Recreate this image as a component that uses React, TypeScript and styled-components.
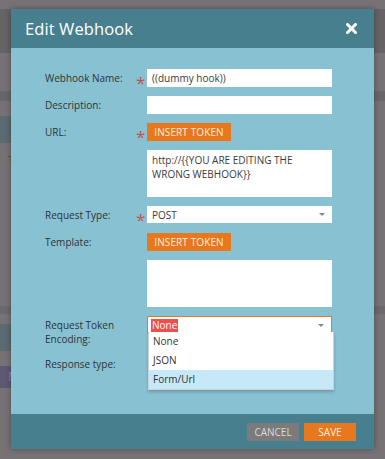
import styled, { createGlobalStyle } from "styled-components";

const GlobalStyle = createGlobalStyle`
  html, body {
    margin: 0;
    padding: 0;
    overflow: hidden;
    background: #767276;
  }
  * {
    box-sizing: border-box;
  }
`;

const Page = styled.div`
  position: relative;
  width: 385px;
  height: 459px;
  overflow: hidden;
  display: flex;
  flex-direction: column;
  background: #767276;
  font-family: "Open Sans", "Liberation Sans", sans-serif;
`;

const Strip = styled.div<{ $h: number; $bg?: string }>`
  flex: 0 0 ${(p) => p.$h}px;
  background: ${(p) => p.$bg || "transparent"};
`;

const SideItem = styled.div<{ $h: number; $bg?: string; $color?: string }>`
  flex: 0 0 ${(p) => p.$h}px;
  width: 60px;
  background: ${(p) => p.$bg || "transparent"};
  color: ${(p) => p.$color || "#4d4b4f"};
  font-size: 12px;
  line-height: ${(p) => p.$h}px;
  padding-left: 8px;
  overflow: hidden;
  white-space: nowrap;
`;

const Modal = styled.div`
  position: absolute;
  left: 11px;
  top: 9px;
  width: 363px;
  height: 440px;
  display: flex;
  flex-direction: column;
  box-shadow: 0 0 6px rgba(0, 0, 0, 0.35);
`;

const Header = styled.div`
  flex: 0 0 39px;
  background: #477f8f;
  display: flex;
  align-items: center;
  justify-content: space-between;
  padding: 0 17px 0 14px;
`;

const Title = styled.h1`
  margin: 0;
  font-size: 16.5px;
  font-weight: 400;
  color: #ffffff;
  letter-spacing: 0.1px;
`;

const CloseButton = styled.button`
  border: 0;
  padding: 0;
  background: none;
  width: 11px;
  height: 11px;
  display: flex;
  cursor: pointer;
`;

const Body = styled.div`
  position: relative;
  flex: 1;
  background: #88c1d2;
  padding: 21px 0 0 34px;
`;

const Form = styled.div`
  display: grid;
  grid-template-columns: 91px 11px 185px;
  row-gap: 9px;
  align-items: start;
`;

const Label = styled.label`
  font-size: 10px;
  line-height: 14px;
  color: #2f3336;
  padding-top: 2px;
`;

const Star = styled.span`
  font-size: 17px;
  line-height: 18px;
  color: #c6504c;
  padding-top: 5px;
  height: 18px;
  display: block;
`;

const Field = styled.div`
  display: flex;
  flex-direction: column;
  gap: 9px;
  align-items: flex-start;
`;

const Input = styled.div`
  width: 185px;
  height: 18px;
  background: #ffffff;
  font-size: 10px;
  line-height: 18px;
  color: #3b3b3b;
  padding: 0 5px;
`;

const TextArea = styled.div`
  width: 185px;
  height: 47px;
  background: #ffffff;
  font-size: 10px;
  line-height: 14px;
  color: #3b3b3b;
  padding: 3px 5px;
`;

const Select = styled.div<{ $open?: boolean }>`
  width: 185px;
  height: ${(p) => (p.$open ? 18 : 17)}px;
  background: #ffffff;
  font-size: 10px;
  color: #3b3b3b;
  padding: 0 5px;
  display: flex;
  align-items: center;
  justify-content: space-between;
  border: ${(p) => (p.$open ? "1px solid #e8781e" : "0")};
  border-bottom: 0;
  padding-left: ${(p) => (p.$open ? 4 : 5)}px;
`;

const Selected = styled.span`
  background: #f04f4e;
  color: #ffffff;
  line-height: 13px;
  padding: 0 1px;
  margin-left: -1px;
`;

const Caret = styled.span`
  width: 0;
  height: 0;
  border-left: 3px solid transparent;
  border-right: 3px solid transparent;
  border-top: 3px solid #888;
  margin-right: 2px;
`;

const TokenButton = styled.button`
  border: 0;
  background: #e8781e;
  color: #fdeee0;
  font-family: inherit;
  font-size: 10px;
  height: 18px;
  width: 84px;
  padding: 0;
  text-transform: uppercase;
  letter-spacing: 0.1px;
`;

const Dropdown = styled.ul`
  position: absolute;
  left: 137px;
  top: 284px;
  width: 186px;
  margin: 0;
  padding: 0;
  list-style: none;
  background: #ffffff;
  border: 1px solid #c9d3d8;
  border-top: 0;
  box-shadow: 0 2px 3px rgba(0, 0, 0, 0.2);
`;

const Option = styled.li<{ $active?: boolean }>`
  height: 19px;
  line-height: 19px;
  font-size: 10px;
  color: #333;
  padding-left: 4px;
  background: ${(p) => (p.$active ? "#c6e8f7" : "#ffffff")};
`;

const Footer = styled.div`
  flex: 0 0 35px;
  background: #477f8f;
  display: flex;
  align-items: center;
  justify-content: flex-end;
  gap: 5px;
  padding-right: 18px;
`;

const FooterButton = styled.button<{ $primary?: boolean }>`
  border: 0;
  height: 18px;
  width: 52px;
  padding: 0;
  font-family: inherit;
  font-size: 10px;
  text-transform: uppercase;
  background: ${(p) => (p.$primary ? "#e8781e" : "#7b7b7b")};
  color: ${(p) => (p.$primary ? "#fdeee0" : "#dadada")};
`;

function CloseIcon() {
  return (
    <svg width="11" height="11" viewBox="0 0 11 11">
      <path d="M1.5 1.5 L9.5 9.5 M9.5 1.5 L1.5 9.5" stroke="#fff" strokeWidth="3" strokeLinecap="square" />
    </svg>
  );
}

export default function App() {
  return (
    <>
      <GlobalStyle />
      <Page>
        <Strip $h={9} />
        <Strip $h={44} $bg="#666367" />
        <Strip $h={38} />
        <Strip $h={10} $bg="#69666a" />
        <Strip $h={15} />
        <SideItem $h={27} $bg="#5c6a71" />
        <SideItem $h={36} $color="#4e4b50">Ti</SideItem>
        <Strip $h={127} />
        <Strip $h={8} $bg="#6c696d" />
        <Strip $h={10} />
        <SideItem $h={27} $bg="#5c6a71" />
        <Strip $h={15} />
        <SideItem $h={22} $bg="#5f5873" $color="#8e87a3">Mar</SideItem>

        <Modal>
          <Header>
            <Title>Edit Webhook</Title>
            <CloseButton aria-label="Close">
              <CloseIcon />
            </CloseButton>
          </Header>
          <Body>
            <Form>
              <Label>Webhook Name:</Label>
              <Star>*</Star>
              <Input>((dummy hook))</Input>

              <Label>Description:</Label>
              <span />
              <Input />

              <Label>URL:</Label>
              <Star>*</Star>
              <Field>
                <TokenButton>Insert Token</TokenButton>
                <TextArea>
                  http://{"{{"}YOU ARE EDITING THE
                  <br />
                  WRONG WEBHOOK{"}}"}
                </TextArea>
              </Field>

              <Label>Request Type:</Label>
              <Star>*</Star>
              <Select>
                POST
                <Caret />
              </Select>

              <Label>Template:</Label>
              <span />
              <Field>
                <TokenButton>Insert Token</TokenButton>
                <TextArea />
              </Field>

              <Label>
                Request Token
                <br />
                Encoding:
              </Label>
              <span />
              <Select $open>
                <Selected>None</Selected>
                <Caret />
              </Select>

              <Label>Response type:</Label>
              <span />
              <span />
            </Form>
            <Dropdown>
              <Option>None</Option>
              <Option>JSON</Option>
              <Option $active>Form/Url</Option>
            </Dropdown>
          </Body>
          <Footer>
            <FooterButton>Cancel</FooterButton>
            <FooterButton $primary>Save</FooterButton>
          </Footer>
        </Modal>
      </Page>
    </>
  );
}
